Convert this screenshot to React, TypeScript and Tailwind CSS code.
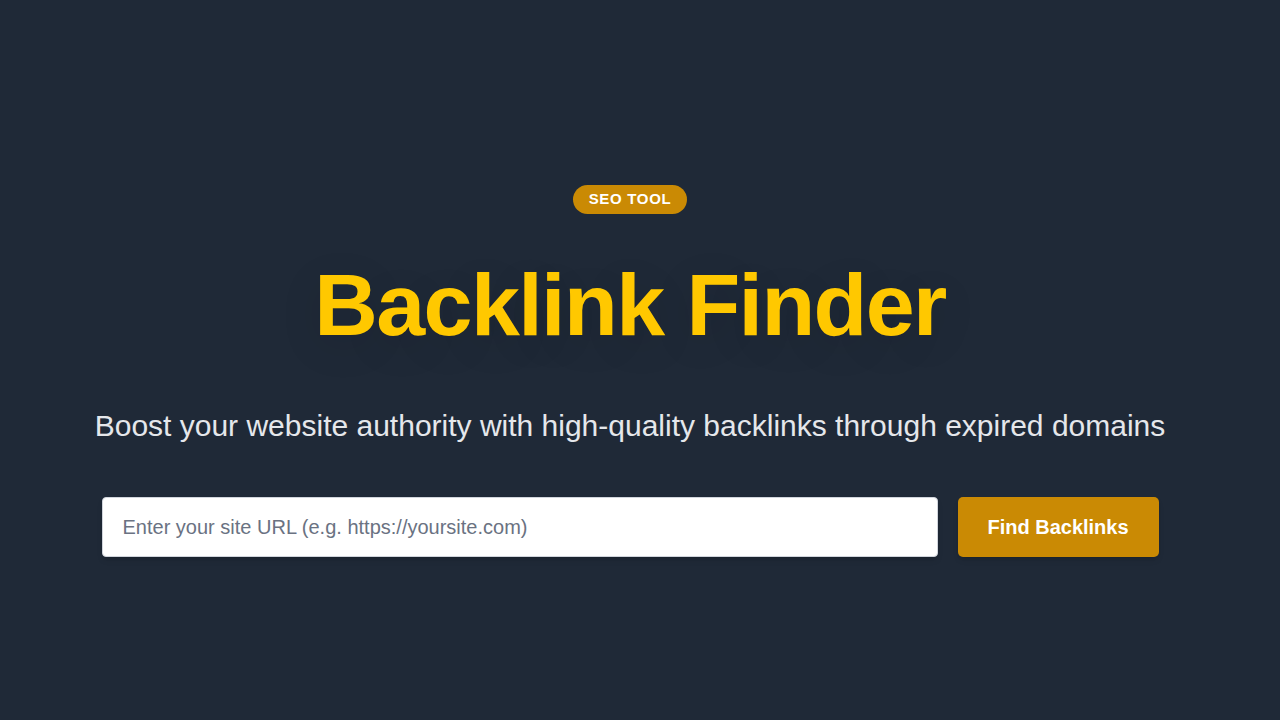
import React, { useState } from 'react';

export default function App() {
  const [url, setUrl] = useState('');

  return (
    <div className="min-h-screen w-full bg-[#1f2937] font-['Liberation_Sans',Arial,sans-serif]">
      <div className="flex flex-col items-center pt-[185px] pr-5">
        <span className="inline-flex h-[29px] w-[114px] items-center justify-center rounded-full bg-[#ca8a04] text-[15px] font-bold tracking-[0.045em] text-white">
          SEO TOOL
        </span>

        <h1 className="mt-[47px] text-[88px] font-bold leading-none tracking-[-0.018em] text-[#ffc800] [text-shadow:0_10px_40px_rgba(0,0,0,0.12)]">
          Backlink Finder
        </h1>

        <p className="mt-[62px] text-[30px] leading-none text-[#e5e7eb]">
          Boost your website authority with high-quality backlinks through expired domains
        </p>

        <form
          className="mt-[56px] flex gap-5"
          onSubmit={(e) => e.preventDefault()}
        >
          <input
            type="text"
            value={url}
            onChange={(e) => setUrl(e.target.value)}
            placeholder="Enter your site URL (e.g. https://yoursite.com)"
            className="h-[60px] w-[836px] rounded-[4px] border border-gray-300 bg-white px-5 text-[20px] text-gray-800 shadow-md outline-none placeholder:text-gray-500"
          />
          <button
            type="submit"
            className="h-[60px] w-[201px] rounded-[5px] bg-[#ca8a04] text-[20px] font-bold text-white shadow-md"
          >
            Find Backlinks
          </button>
        </form>
      </div>
    </div>
  );
}
